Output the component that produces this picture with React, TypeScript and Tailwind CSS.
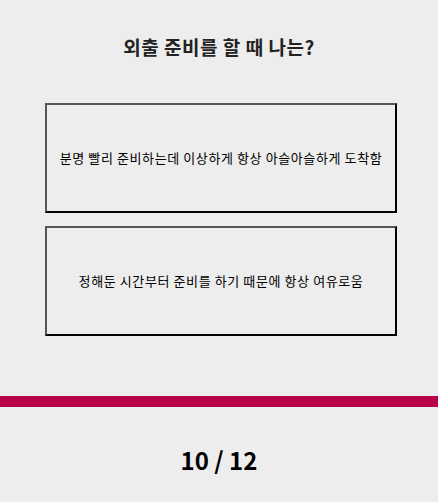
import React from 'react';

const options = [
  '분명 빨리 준비하는데 이상하게 항상 아슬아슬하게 도착함',
  '정해둔 시간부터 준비를 하기 때문에 항상 여유로움',
];

export default function App() {
  const [picked, setPicked] = React.useState<number | null>(null);

  return (
    <div
      className="min-h-[502px] w-full bg-[#ededed] text-black flex flex-col"
      style={{ fontFamily: '"Noto Sans CJK KR", "Noto Sans", sans-serif' }}
    >
      {/* 질문 */}
      <h1 className="pt-[35px] h-[103px] text-center text-[19px] tracking-[0.5px] font-bold leading-[24px] text-[#222]">
        외출 준비를 할 때 나는?
      </h1>

      {/* 선택지 */}
      <div className="flex flex-col gap-[13px] px-[45px] w-full">
        {options.map((text, i) => (
          <button
            key={i}
            onClick={() => setPicked(i)}
            className={`h-[110px] w-[352px] border-2 border-t-[#555] border-l-[#555] border-b-black border-r-black text-[13px] tracking-[0.6px] leading-[16px] ${
              picked === i ? 'bg-[#e0e0e0]' : 'bg-transparent'
            }`}
          >
            {text}
          </button>
        ))}
      </div>

      {/* 진행 바 */}
      <div className="mt-[60px] h-[11px] w-full bg-[#b9004a]" />

      <div className="flex-1 flex items-center justify-center text-[24px] font-bold pt-[20px] pb-[10px]">
        10 / 12
      </div>
    </div>
  );
}
